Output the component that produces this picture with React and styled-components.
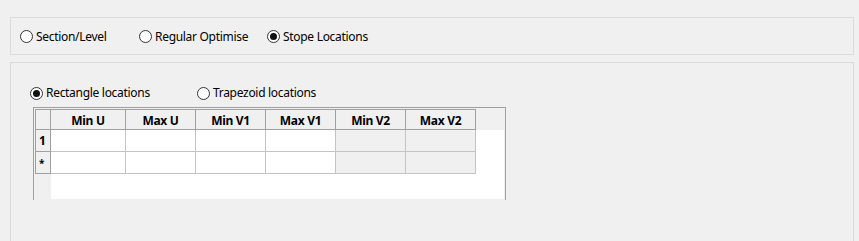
import React from 'react'
import styled, { createGlobalStyle } from 'styled-components'

const GlobalStyle = createGlobalStyle`
  html, body {
    margin: 0;
    padding: 0;
    background: #f0f0f0;
  }
  body {
    font-family: "Noto Sans", "Open Sans", sans-serif;
    font-size: 12px;
    letter-spacing: -0.3px;
    color: #000;
  }
`;

const Page = styled.div`
  width: 859px;
  height: 241px;
  box-sizing: border-box;
  padding: 17px 5px 0 10px;
  display: flex;
  flex-direction: column;
  gap: 7px;
  overflow: hidden;
`;

const ModePanel = styled.div`
  height: 38px;
  box-sizing: border-box;
  border: 1px solid #dadada;
  display: flex;
  align-items: center;
  padding: 1px 0 0 9px;
`;

const LocationsPanel = styled.div`
  flex: 1;
  box-sizing: border-box;
  border: 1px solid #dadada;
  border-bottom: none;
  padding: 22px 0 0 19px;
`;

const RadioLabel = styled.label`
  display: flex;
  align-items: center;
  gap: 3px;
  width: ${({ $width }) => ($width ? `${$width}px` : 'auto')};
  flex: none;
  white-space: nowrap;
  line-height: 16px;
`;

const Circle = styled.span`
  width: 13px;
  height: 13px;
  box-sizing: border-box;
  border: 1px solid #333;
  border-radius: 50%;
  background: #fff;
  display: flex;
  align-items: center;
  justify-content: center;
  &::after {
    content: "";
    width: 7px;
    height: 7px;
    border-radius: 50%;
    background: ${({ $checked }) => ($checked ? '#111' : 'transparent')};
  }
`;

const ShapeRow = styled.div`
  display: flex;
  align-items: center;
  height: 16px;
`;

const Radio = ({ label, checked, width }) => (
  <RadioLabel $width={width}>
    <Circle $checked={checked} />
    <span>{label}</span>
  </RadioLabel>
);

const Table = styled.div`
  margin: 6px 0 0 3px;
  width: 473px;
  height: 93px;
  box-sizing: border-box;
  border: 1px solid #a0a0a0;
  border-bottom: none;
  padding: 1px 0 0 1px;
  display: grid;
  grid-template-columns: 16px 1fr;
  grid-template-rows: 21px 1fr;
`;

const Corner = styled.div`
  background: #f0f0f0;
  box-sizing: border-box;
  border: 1px solid #a0a0a0;
`;

const HeaderStrip = styled.div`
  background: #f0f0f0;
  display: flex;
  margin-right: 1px;
`;

const ColHeader = styled.div`
  width: ${({ $w }) => $w}px;
  box-sizing: border-box;
  border-top: 1px solid #a0a0a0;
  border-right: 1px solid #a0a0a0;
  border-bottom: 1px solid #a0a0a0;
  display: flex;
  align-items: center;
  justify-content: center;
  font-weight: bold;
  padding-top: 1px;
`;

const RowHeaderStrip = styled.div`
  background: #f0f0f0;
  display: flex;
  flex-direction: column;
  margin-bottom: 1px;
`;

const RowHeader = styled.div`
  height: 22px;
  box-sizing: border-box;
  border-left: 1px solid #a0a0a0;
  border-right: 1px solid #a0a0a0;
  border-bottom: 1px solid #a0a0a0;
  display: flex;
  align-items: center;
  padding-left: 3px;
  font-weight: bold;
  font-size: ${({ $small }) => ($small ? '10px' : '12px')};
`;

const Body = styled.div`
  background: #fff;
  margin-right: 1px;
  margin-bottom: 1px;
`;

const Row = styled.div`
  display: flex;
  height: 22px;
`;

const Cell = styled.div`
  width: ${({ $w }) => $w}px;
  box-sizing: border-box;
  border-right: 1px solid #c4c4c4;
  border-bottom: 1px solid #c4c4c4;
  background: ${({ $disabled }) => ($disabled ? '#f0f0f0' : '#fff')};
`;

const columns = [
  { name: 'Min U', w: 75 },
  { name: 'Max U', w: 70 },
  { name: 'Min V1', w: 70 },
  { name: 'Max V1', w: 70 },
  { name: 'Min V2', w: 70, disabled: true },
  { name: 'Max V2', w: 70, disabled: true },
];

const rows = ['1', '*'];

const App = () => {
  return (
    <>
      <GlobalStyle />
      <Page>
        <ModePanel>
          <Radio label="Section/Level" width={119} />
          <Radio label="Regular Optimise" width={128} />
          <Radio label="Stope Locations" checked />
        </ModePanel>
        <LocationsPanel>
          <ShapeRow>
            <Radio label="Rectangle locations" checked width={167} />
            <Radio label="Trapezoid locations" />
          </ShapeRow>
          <Table>
            <Corner />
            <HeaderStrip>
              {columns.map((c) => (
                <ColHeader key={c.name} $w={c.w}>{c.name}</ColHeader>
              ))}
            </HeaderStrip>
            <RowHeaderStrip>
              {rows.map((r) => (
                <RowHeader key={r} $small={r === '*'}>{r}</RowHeader>
              ))}
            </RowHeaderStrip>
            <Body>
              {rows.map((r) => (
                <Row key={r}>
                  {columns.map((c) => (
                    <Cell key={c.name} $w={c.w} $disabled={c.disabled} />
                  ))}
                </Row>
              ))}
            </Body>
          </Table>
        </LocationsPanel>
      </Page>
    </>
  )
}

export default App
